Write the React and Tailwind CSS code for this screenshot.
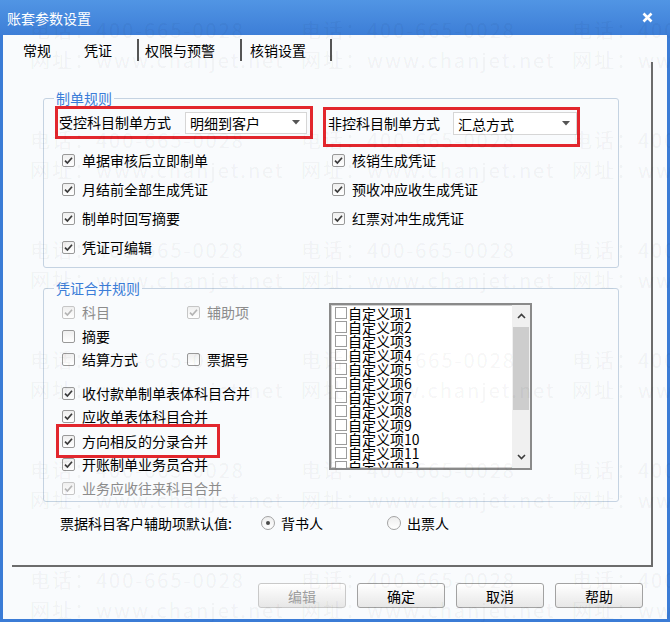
import React from "react";

const FONT = "font-['Noto_Sans_CJK_SC','Noto_Sans',sans-serif]";

const Check = ({ checked, disabled }) => (
  <span
    className={`w-[13px] h-[13px] shrink-0 rounded-[2px] border flex items-center justify-center bg-linear-to-b from-[#efefef] to-white ${
      disabled ? "border-[#c6c6c6]" : "border-[#999999]"
    }`}
  >
    {checked && (
      <svg width="11" height="11" viewBox="0 0 11 11">
        <path
          d="M2 5.6 4.4 8 9 2.8"
          fill="none"
          stroke={disabled ? "#b4b4b4" : "#3a3a3a"}
          strokeWidth="1.7"
        />
      </svg>
    )}
  </span>
);

const CheckItem = ({ label, checked, disabled }) => (
  <div className="flex items-center gap-[7px] whitespace-nowrap">
    <Check checked={checked} disabled={disabled} />
    <span className={disabled ? "text-[#8c8c8c]" : "text-black"}>{label}</span>
  </div>
);

const Combo = ({ value, className }) => (
  <div
    className={`flex items-center justify-between bg-white border border-[#d6d6d6] pl-[4px] pr-[6px] ${className}`}
  >
    <span className="leading-none">{value}</span>
    <svg width="8" height="5" viewBox="0 0 8 5">
      <path d="M0 0h8L4 4.5z" fill="#555" />
    </svg>
  </div>
);

const Radio = ({ checked }) => (
  <span className="w-[14px] h-[14px] shrink-0 rounded-full border border-[#a3a3a3] bg-linear-to-b from-[#eeeeee] to-white flex items-center justify-center">
    {checked && <span className="w-[4px] h-[4px] rounded-full bg-[#4a4a4a]" />}
  </span>
);

const Chevron = ({ up }) => (
  <svg width="9" height="6" viewBox="0 0 9 6">
    <path
      d={up ? "M1 5 4.5 1.5 8 5" : "M1 1 4.5 4.5 8 1"}
      fill="none"
      stroke="#3c3c3c"
      strokeWidth="1.6"
    />
  </svg>
);

const Button = ({ label, disabled }) => (
  <button
    type="button"
    className={`w-[88px] h-[25px] rounded-[3px] border bg-linear-to-b from-white to-[#e7e7e7] text-[14px] leading-none ${
      disabled ? "border-[#c9c9c9] text-[#9d9d9d]" : "border-[#a2a2a2] text-black"
    }`}
  >
    {label}
  </button>
);

// faint phone / site watermark tiled over the whole dialog
const Watermark = () => {
  const rows = [0, 1, 2, 3, 4, 5];
  const cols = [0, 1, 2];
  return (
    <div className="absolute inset-0 z-30 pointer-events-none overflow-hidden flex flex-col gap-[50px] pt-[15px] text-[20px] leading-[30px] tracking-[2px] text-black/[0.055]">
      {rows.map((r) => (
        <div key={r} className="flex flex-col">
          <div className="flex pl-[30px]">
            {cols.map((c) => (
              <span key={c} className="w-[271px] shrink-0 whitespace-nowrap">
                电话：400-665-0028
              </span>
            ))}
          </div>
          <div className="flex pl-[30px]">
            {cols.map((c) => (
              <span key={c} className="w-[271px] shrink-0 whitespace-nowrap">
                网址：www.chanjet.net
              </span>
            ))}
          </div>
        </div>
      ))}
    </div>
  );
};

export default function App() {
  const items = Array.from({ length: 12 }, (_, i) => `自定义项${i + 1}`);

  return (
    <div className={`relative w-[670px] h-[622px] overflow-hidden bg-[#3b7cd6] flex flex-col text-[14px] ${FONT}`}>
      {/* title bar */}
      <div className="h-[35px] shrink-0 flex items-center justify-between pl-[7px] pr-[17px] bg-linear-to-b from-[#5195e4] to-[#3d7ed7] text-white">
        <span className="leading-none">账套参数设置</span>
        <svg width="11" height="11" viewBox="0 0 11 11">
          <path d="M1.5 1.5 9.5 9.5M9.5 1.5 1.5 9.5" stroke="#fff" strokeWidth="2.6" />
        </svg>
      </div>

      <div className="flex-1 mx-[3px] mb-[3px] bg-[#f9fbfd] flex flex-col">
        {/* tabs */}
        <div className="h-[27px] shrink-0 flex items-center pt-[3px] pl-[20px] text-black">
          <span>常规</span>
          <span className="ml-[33px]">凭证</span>
          <span className="ml-[25px] w-[2px] h-[22px] bg-[#555]" />
          <span className="ml-[6px]">权限与预警</span>
          <span className="ml-[25px] w-[2px] h-[22px] bg-[#555]" />
          <span className="ml-[8px]">核销设置</span>
          <span className="ml-[24px] w-[2px] h-[22px] bg-[#555]" />
        </div>

        {/* tab panel */}
        <div className="ml-[9px] w-[641px] h-[505px] shrink-0 border-r-2 border-b-2 border-[#6c6c6c] flex flex-col">
          {/* 制单规则 */}
          <fieldset className="ml-[31px] mt-[28px] w-[576px] border border-[#c5d3e2] rounded-[3px] pb-[5px]">
            <legend className="ml-[10px] px-[2px] leading-[16px] text-[#3b7dd8]">制单规则</legend>
            <div className="flex items-start">
              <div className="ml-[11px] w-[258px] h-[33px] border-[3px] border-[#e2262d] flex items-center pl-[1px]">
                <span className="w-[126px] shrink-0 whitespace-nowrap">受控科目制单方式</span>
                <Combo value="明细到客户" className="w-[122px] h-[22px]" />
              </div>
              <div className="ml-[10px] mt-[1px] w-[257px] h-[40px] border-[3px] border-[#e2262d] flex items-start pt-[2px] pl-[2px]">
                <span className="w-[125px] shrink-0 whitespace-nowrap leading-[23px]">非控科目制单方式</span>
                <Combo value="汇总方式" className="w-[124px] h-[23px]" />
              </div>
            </div>
            <div className="grid grid-cols-[270px_1fr] auto-rows-[29px] items-center pl-[18px] -mt-[1px]">
              <CheckItem label="单据审核后立即制单" checked />
              <CheckItem label="核销生成凭证" checked />
              <CheckItem label="月结前全部生成凭证" checked />
              <CheckItem label="预收冲应收生成凭证" checked />
              <CheckItem label="制单时回写摘要" checked />
              <CheckItem label="红票对冲生成凭证" checked />
              <CheckItem label="凭证可编辑" checked />
            </div>
          </fieldset>

          {/* 凭证合并规则 */}
          <fieldset className="ml-[31px] mt-[12px] w-[576px] border border-[#c5d3e2] rounded-[3px]">
            <legend className="ml-[10px] px-[2px] leading-[16px] text-[#3b7dd8]">凭证合并规则</legend>
            <div className="flex items-start">
              <div className="w-[285px] shrink-0 flex flex-col pt-[4px]">
                <div className="h-[24px] flex items-center pl-[18px]">
                  <div className="w-[125px]">
                    <CheckItem label="科目" checked disabled />
                  </div>
                  <CheckItem label="辅助项" checked disabled />
                </div>
                <div className="h-[24px] flex items-center pl-[18px]">
                  <CheckItem label="摘要" />
                </div>
                <div className="h-[23px] flex items-center pl-[18px]">
                  <div className="w-[125px]">
                    <CheckItem label="结算方式" />
                  </div>
                  <CheckItem label="票据号" />
                </div>
                <div className="mt-[10px] h-[24px] flex items-center pl-[18px]">
                  <CheckItem label="收付款单制单表体科目合并" checked />
                </div>
                <div className="h-[23px] flex items-center pl-[18px]">
                  <CheckItem label="应收单表体科目合并" checked />
                </div>
                <div className="relative z-10 -mt-[4px] ml-[12px] w-[164px] h-[34px] border-[3px] border-[#e2262d] flex items-center pl-[3px]">
                  <CheckItem label="方向相反的分录合并" checked />
                </div>
                <div className="-mt-[5px] h-[22px] flex items-center pl-[18px]">
                  <CheckItem label="开账制单业务员合并" checked />
                </div>
                <div className="h-[26px] flex items-center pl-[18px]">
                  <CheckItem label="业务应收往来科目合并" checked disabled />
                </div>
              </div>

              {/* list box */}
              <div className="mt-[7px] w-[203px] h-[167px] border-2 border-[#8a8a8a] shadow-[inset_0_0_0_1px_#cfcfcf] bg-white flex">
                <div className="flex-1 overflow-hidden pt-[1px] pl-[4px]">
                  {items.map((t) => (
                    <div key={t} className="h-[14px] flex items-center whitespace-nowrap">
                      <span className="w-[12px] h-[12px] shrink-0 border border-[#9c9c9c] bg-white" />
                      <span className="ml-[1px] leading-[14px]">{t}</span>
                    </div>
                  ))}
                </div>
                <div className="w-[18px] shrink-0 bg-[#f0f0f0] flex flex-col">
                  <div className="h-[22px] flex items-center justify-center">
                    <Chevron up />
                  </div>
                  <div className="mx-[1px] h-[83px] bg-[#cdcdcd]" />
                  <div className="flex-1" />
                  <div className="h-[22px] flex items-center justify-center">
                    <Chevron />
                  </div>
                </div>
              </div>
            </div>
          </fieldset>

          {/* radio row */}
          <div className="mt-[9px] ml-[48px] h-[24px] flex items-center whitespace-nowrap">
            <span className="w-[201px] shrink-0">票据科目客户辅助项默认值:</span>
            <div className="w-[126px] shrink-0 flex items-center gap-[6px]">
              <Radio checked />
              <span>背书人</span>
            </div>
            <div className="flex items-center gap-[6px]">
              <Radio />
              <span>出票人</span>
            </div>
          </div>
        </div>

        {/* buttons */}
        <div className="mt-[16px] pl-[255px] flex gap-[11px]">
          <Button label="编辑" disabled />
          <Button label="确定" />
          <Button label="取消" />
          <Button label="帮助" />
        </div>
      </div>

      <Watermark />
    </div>
  );
}
